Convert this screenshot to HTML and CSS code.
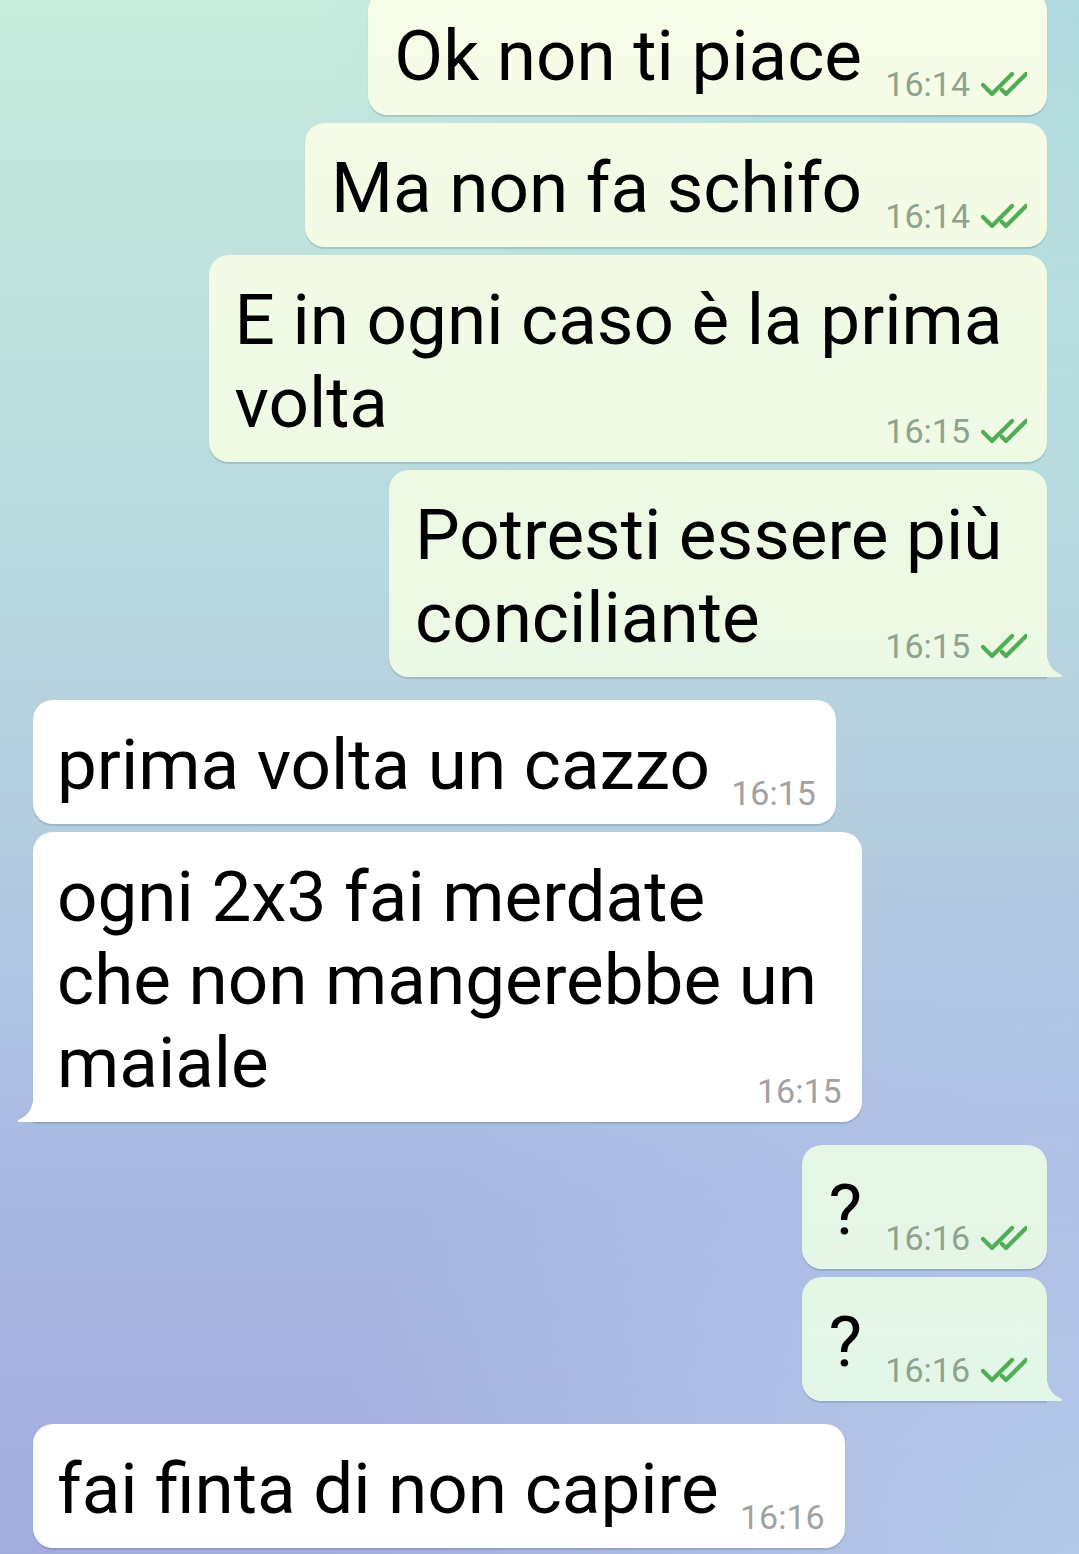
FILE: index.html
```html
<!DOCTYPE html>
<html lang="it">
<head>
<meta charset="utf-8">
<title>Chat</title>
<link rel="stylesheet" href="styles.css">
</head>
<body>
<main class="chat">
  <section class="group out">
    <div class="bubble"><span class="text">Ok non ti piace</span><span class="spacer"></span><span class="meta"><span class="time">16:14</span><svg class="checks" viewBox="0 0 46 26" width="46" height="26"><path d="M2 14 L11 23 L31 3 M21 19 L25 23 L45 3"/></svg></span></div>
    <div class="bubble"><span class="text">Ma non fa schifo</span><span class="spacer"></span><span class="meta"><span class="time">16:14</span><svg class="checks" viewBox="0 0 46 26" width="46" height="26"><path d="M2 14 L11 23 L31 3 M21 19 L25 23 L45 3"/></svg></span></div>
    <div class="bubble"><span class="text">E in ogni caso è la prima&nbsp;<br>volta</span><span class="spacer"></span><span class="meta"><span class="time">16:15</span><svg class="checks" viewBox="0 0 46 26" width="46" height="26"><path d="M2 14 L11 23 L31 3 M21 19 L25 23 L45 3"/></svg></span></div>
    <div class="bubble tail"><span class="text">Potresti essere più&nbsp;<br>conciliante</span><span class="spacer"></span><span class="meta"><span class="time">16:15</span><svg class="checks" viewBox="0 0 46 26" width="46" height="26"><path d="M2 14 L11 23 L31 3 M21 19 L25 23 L45 3"/></svg></span></div>
  </section>

  <section class="group in">
    <div class="bubble"><span class="text">prima volta un cazzo</span><span class="spacer"></span><span class="meta"><span class="time">16:15</span></span></div>
    <div class="bubble tail"><span class="text">ogni 2x3 fai merdate<br>che non mangerebbe un&nbsp;<br>maiale</span><span class="spacer"></span><span class="meta"><span class="time">16:15</span></span></div>
  </section>

  <section class="group out">
    <div class="bubble"><span class="text">?</span><span class="spacer"></span><span class="meta"><span class="time">16:16</span><svg class="checks" viewBox="0 0 46 26" width="46" height="26"><path d="M2 14 L11 23 L31 3 M21 19 L25 23 L45 3"/></svg></span></div>
    <div class="bubble tail"><span class="text">?</span><span class="spacer"></span><span class="meta"><span class="time">16:16</span><svg class="checks" viewBox="0 0 46 26" width="46" height="26"><path d="M2 14 L11 23 L31 3 M21 19 L25 23 L45 3"/></svg></span></div>
  </section>

  <section class="group in">
    <div class="bubble"><span class="text">fai finta di non capire</span><span class="spacer"></span><span class="meta"><span class="time">16:16</span></span></div>
  </section>
</main>
</body>
</html>
```

FILE: styles.css
```css
html, body {
  margin: 0;
  padding: 0;
}

body {
  width: 1079px;
  height: 1554px;
  overflow: hidden;
  font-family: Roboto, "Noto Sans", "Liberation Sans", sans-serif;
  color: #000;
  background:
    radial-gradient(ellipse 70% 45% at 100% 0%, rgba(176, 216, 222, 0.95), rgba(176, 216, 222, 0) 100%),
    radial-gradient(ellipse 70% 45% at 100% 100%, rgba(182, 204, 232, 0.95), rgba(182, 204, 232, 0) 100%),
    linear-gradient(to bottom, #c6eadb 0%, #bcdfde 25%, #b3cce0 55%, #a8b6e2 78%, #a3ade0 100%);
}

.chat {
  display: flex;
  flex-direction: column;
  gap: 23px;
  margin-top: -9px;
}

.group {
  display: flex;
  flex-direction: column;
  gap: 8px;
}

.group.out {
  align-items: flex-end;
  padding-right: 32px;
}

.group.in {
  align-items: flex-start;
  padding-left: 33px;
}

.bubble {
  position: relative;
  padding: 23px 27px 18px 26px;
  font-size: 71px;
  line-height: 83px;
  border-radius: 20px;
  box-shadow: 0 2px 1px rgba(40, 70, 80, 0.18);
  white-space: nowrap;
}

.out .bubble {
  background: linear-gradient(to bottom, #f7fce6 0px, #eef9e3 500px, #e6f7e4 1000px, #e1f6e9 1554px) fixed;
}

.in .bubble {
  background: #ffffff;
  padding-left: 24px;
}

.spacer {
  display: inline-block;
  width: 158px;
  height: 1px;
}

.in .spacer {
  width: 99px;
}

.meta {
  position: absolute;
  right: 20px;
  bottom: 14px;
  display: flex;
  align-items: flex-end;
  gap: 11px;
  font-size: 34px;
  line-height: 34px;
}

.time {
  color: #8ea38e;
}

.in .time {
  color: #a1a1a1;
}

.checks {
  display: block;
  margin-bottom: 4px;
  fill: none;
  stroke: #4fae54;
  stroke-width: 4.2;
  stroke-linecap: round;
  stroke-linejoin: round;
}

.out .bubble.tail {
  border-bottom-right-radius: 0;
}

.in .bubble.tail {
  border-bottom-left-radius: 0;
}

.bubble.tail::after {
  content: "";
  position: absolute;
  bottom: 0;
  width: 18px;
  height: 32px;
}

.out .bubble.tail::after {
  right: -17px;
  background: linear-gradient(to bottom, #f7fce6 0px, #eef9e3 500px, #e6f7e4 1000px, #e1f6e9 1554px) fixed;
  clip-path: path("M0 0 C0 17 5 25 14 29 Q18 31 15 32 L0 32 Z");
}

.in .bubble.tail::after {
  left: -17px;
  background: #ffffff;
  clip-path: path("M18 0 C18 17 13 25 4 29 Q0 31 3 32 L18 32 Z");
}
```
